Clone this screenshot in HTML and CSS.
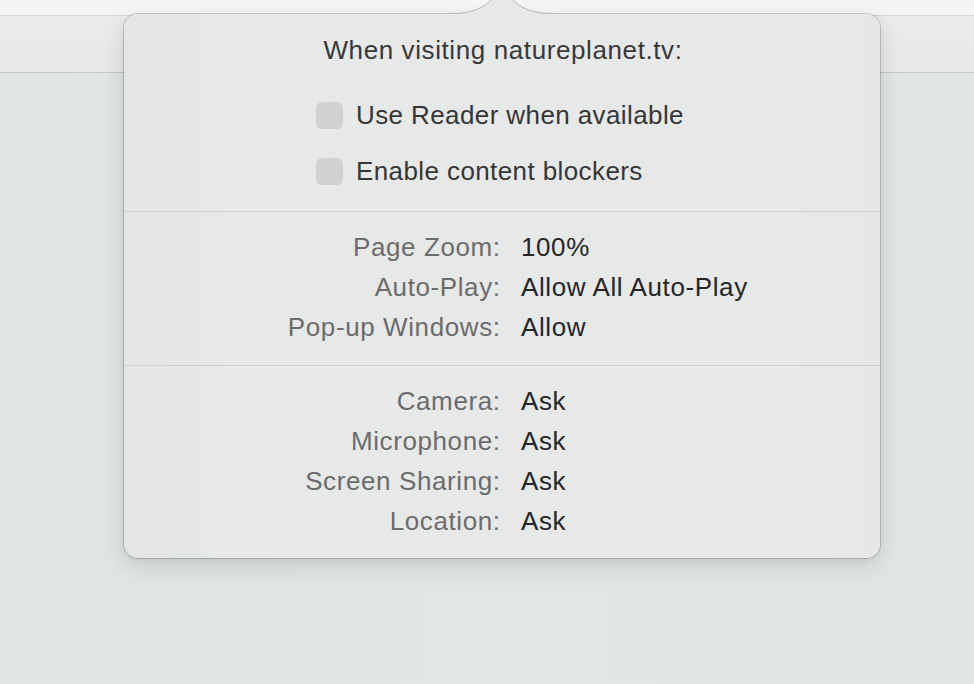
FILE: index.html
```html
<!DOCTYPE html>
<html lang="en">
<head>
<meta charset="utf-8">
<title>Website settings</title>
<link rel="stylesheet" href="styles.css">
</head>
<body>
<div class="window">
  <div class="tabstrip"></div>
  <div class="toolbar"></div>
  <div class="content"></div>

  <div class="popover">
    <svg class="arrow" width="104" height="30" viewBox="0 0 104 30">
      <path d="M0 28.5 C 22 28.5, 32 24, 42 14 L 49 6 Q 52 2 55 6 L 62 14 C 72 24, 82 28.5, 104 28.5 L 104 30 L 0 30 Z" fill="#e7e8e8"/>
      <path d="M0 28.5 C 22 28.5, 32 24, 42 14 L 49 6 Q 52 2 55 6 L 62 14 C 72 24, 82 28.5, 104 28.5" fill="none" stroke="#b4b5b6" stroke-width="1"/>
    </svg>

    <section class="section head">
      <div class="title">When visiting natureplanet.tv:</div>
      <div class="checks">
        <label class="check"><span class="box"></span><span>Use Reader when available</span></label>
        <label class="check"><span class="box"></span><span>Enable content blockers</span></label>
      </div>
    </section>

    <section class="section grid g2">
      <span class="k">Page Zoom:</span><span class="v">100%</span>
      <span class="k">Auto-Play:</span><span class="v">Allow All Auto-Play</span>
      <span class="k">Pop-up Windows:</span><span class="v">Allow</span>
    </section>

    <section class="section grid g3">
      <span class="k">Camera:</span><span class="v">Ask</span>
      <span class="k">Microphone:</span><span class="v">Ask</span>
      <span class="k">Screen Sharing:</span><span class="v">Ask</span>
      <span class="k">Location:</span><span class="v">Ask</span>
    </section>
  </div>
</div>
</body>
</html>
```

FILE: styles.css
```css
* { box-sizing: border-box; }

html, body {
  margin: 0;
  padding: 0;
  width: 974px;
  height: 684px;
  overflow: hidden;
  font-family: "Liberation Sans", Arial, sans-serif;
}

.window {
  position: relative;
  width: 974px;
  height: 684px;
  display: flex;
  flex-direction: column;
  background: #e2e5e6;
}

.tabstrip {
  height: 16px;
  background: #f5f5f5;
  border-bottom: 1px solid #d6d6d6;
}

.toolbar {
  height: 57px;
  background: linear-gradient(#ebebeb, #e8e8e8);
  border-bottom: 1px solid #c9c9c9;
}

.content {
  flex: 1;
  background: linear-gradient(90deg, #e0e4e5, #e3e6e7 50%, #e2e5e6);
}

.popover {
  position: absolute;
  left: 124px;
  top: 14px;
  width: 756px;
  height: 544px;
  border-radius: 14px;
  background: linear-gradient(90deg, #e4e6e6, #e7e8e8 15%, #e7e8e8 85%, #e6e7e7);
  box-shadow: 0 0 0 1px rgba(0, 0, 0, 0.17), 0 8px 24px rgba(0, 0, 0, 0.12), 0 2px 6px rgba(0, 0, 0, 0.06);
  display: flex;
  flex-direction: column;
}

.arrow {
  position: absolute;
  left: 326px;
  top: -29px;
  display: block;
}

.section + .section {
  border-top: 1px solid #cfd0d1;
}

.head {
  padding: 16px 0 20px;
  display: flex;
  flex-direction: column;
}

.title {
  height: 40px;
  line-height: 40px;
  text-align: center;
  font-size: 26px;
  letter-spacing: 0.6px;
  color: #383838;
  padding-left: 2px;
}

.checks {
  margin-top: 25px;
  padding-left: 192px;
  display: flex;
  flex-direction: column;
  gap: 16px;
}

.check {
  height: 40px;
  display: flex;
  align-items: center;
  gap: 13px;
  font-size: 26px;
  letter-spacing: 0.4px;
  color: #363636;
}

.box {
  width: 27px;
  height: 27px;
  border-radius: 6px;
  background: #d0d1d2;
  flex: none;
}

.grid {
  display: grid;
  grid-template-columns: 376px auto;
  column-gap: 21px;
  grid-auto-rows: 40px;
  align-items: center;
  font-size: 26px;
  letter-spacing: 0.6px;
}

.g2 { padding: 15px 0 18px; }
.g3 { padding: 15px 0 17px; }

.k {
  text-align: right;
  color: #6c6c6c;
  margin-right: -0.6px;
}

.v {
  color: #262626;
}
```
